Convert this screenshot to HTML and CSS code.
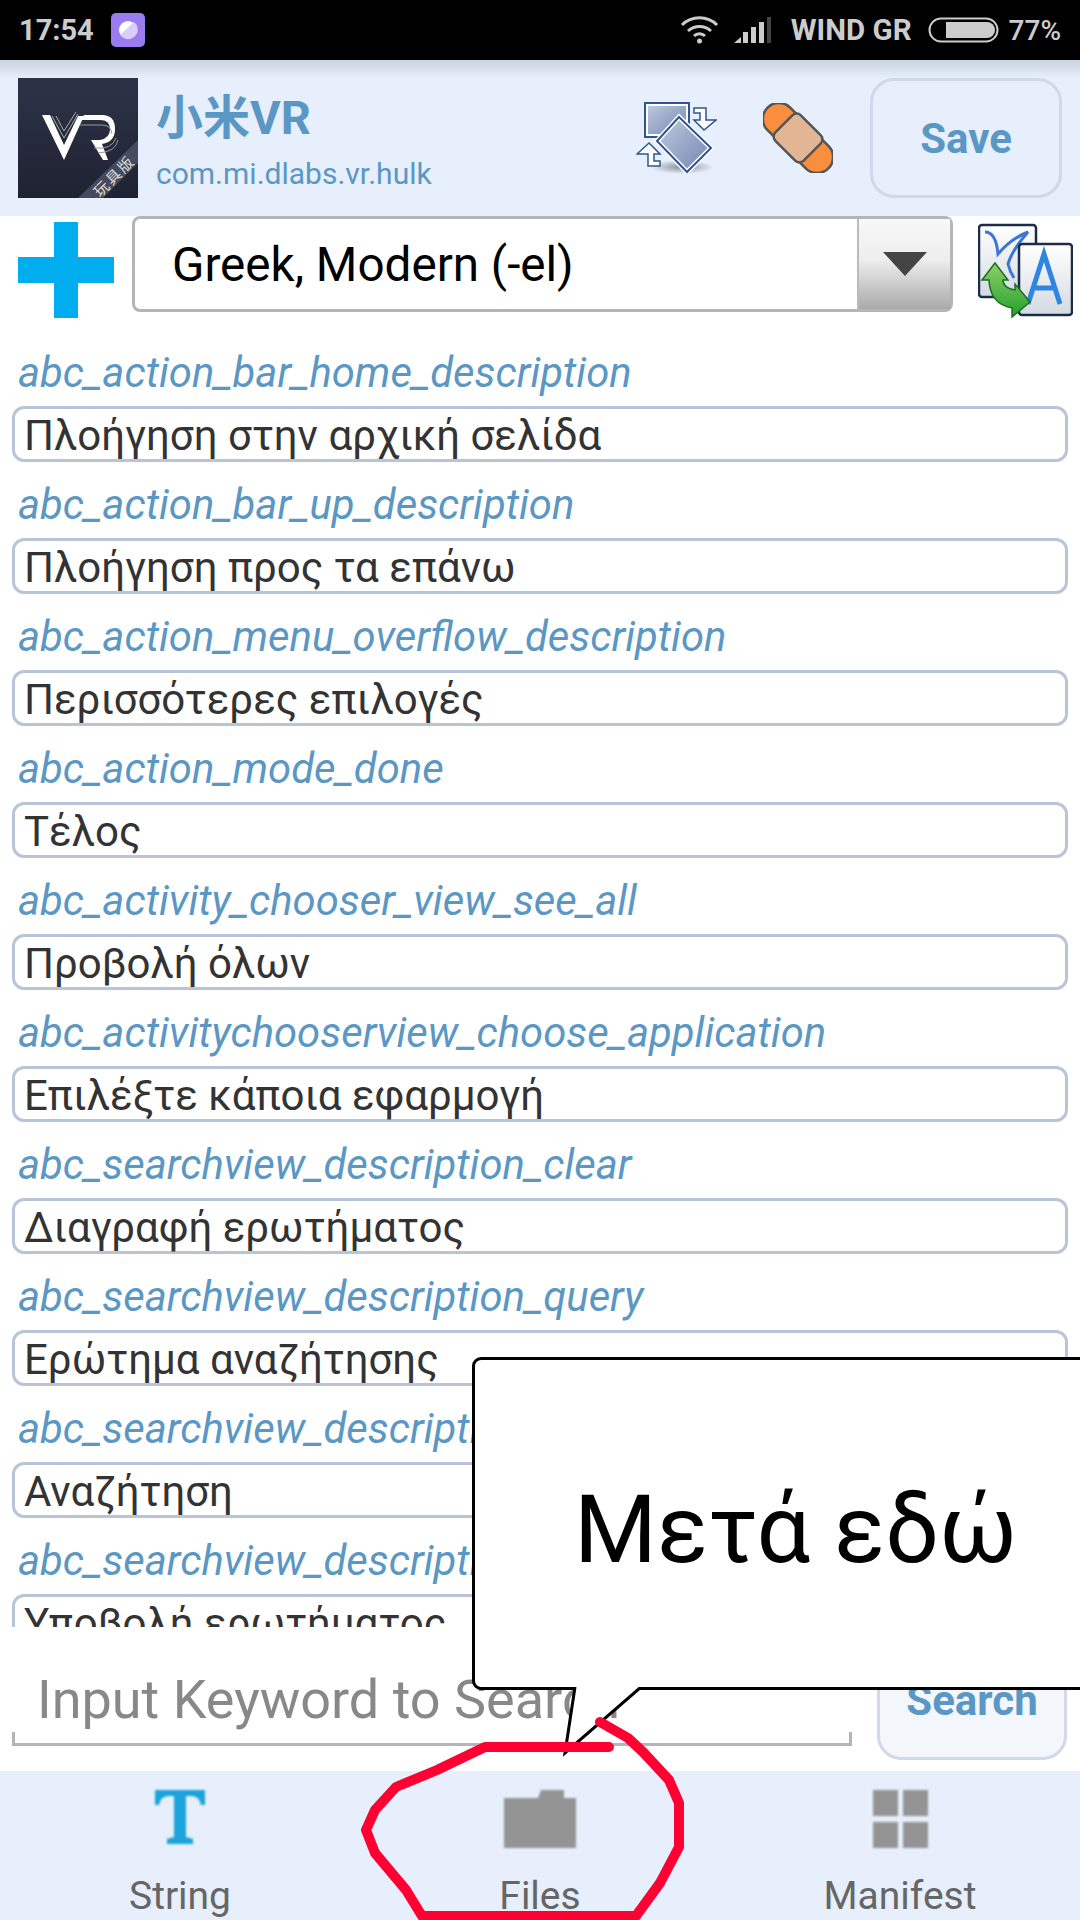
FILE: index.html
```html
<!DOCTYPE html>
<html lang="el">
<head>
  <meta charset="UTF-8" />
  <meta name="viewport" content="width=device-width, initial-scale=1.0" />
  <title>String Editor</title>
  <link rel="stylesheet" href="styles.css">
</head>
<body>
  <div class="app">
    <div class="status">
      <div class="status-left">
        <span class="clock">17:54</span>
        <svg class="notif" width="34" height="34" viewBox="0 0 34 34">
          <rect width="34" height="34" rx="5" fill="#9a7cf0"/>
          <circle cx="17" cy="17" r="9" fill="#fff"/>
          <path d="M9 22 L23 9 A9 9 0 0 1 12 24Z" fill="#d9cdfa"/>
        </svg>
      </div>
      <div class="status-right">
        <svg width="39" height="28" viewBox="0 0 39 28" fill="none" stroke="#ccc" stroke-width="3">
          <path d="M2 9 A25 25 0 0 1 37 9"/>
          <path d="M8 15 A17 17 0 0 1 31 15"/>
          <path d="M14 20 A8 8 0 0 1 25 20"/>
          <circle cx="19.500" cy="25" r="2.500" fill="#ccc" stroke="none"/>
        </svg>
        <svg class="signal" width="37" height="26" viewBox="0 0 37 26" fill="#ccc">
          <path d="M0 26 L7 20 V26Z"/>
          <rect x="9" y="15" width="5" height="11"/>
          <rect x="17" y="10" width="5" height="16"/>
          <rect x="25" y="5" width="5" height="21"/>
          <rect x="33" y="0" width="4" height="26" fill="#444"/>
        </svg>
        <span class="carrier">WIND GR</span>
        <svg width="71" height="26" viewBox="0 0 71 26">
          <rect x="1.500" y="1.500" width="68" height="23" rx="11.500" fill="none" stroke="#ccc" stroke-width="2"/>
          <path d="M18 5 H59 A8 8 0 0 1 59 21 H18Z" fill="#ccc"/>
        </svg>
        <span class="pct">77%</span>
      </div>
    </div>

    <div class="header">
      <svg class="app-icon" width="120" height="120" viewBox="0 0 120 120">
        <defs>
          <linearGradient id="iconBg" x1="0" y1="0" x2="0" y2="1">
            <stop offset="0" stop-color="#2d3347"/>
            <stop offset="1" stop-color="#1f2232"/>
          </linearGradient>
        </defs>
        <rect width="120" height="120" fill="url(#iconBg)"/>
        <path d="M120 62 V85 L85 120 H60Z" fill="#454b5e"/>
        <path d="M24 37 H32 L46 67 L60 38 H66 L46 82Z" fill="#fff"/>
        <path d="M34 38 L46 60 L60 36 M38 38 L46 53 L58 34" fill="none" stroke="#aaa" stroke-width="1"/>
        <path d="M66 37 H84 Q97 37 97 51 Q97 64 84 66 L90 82 H85 L73 62 H82 Q92 60 92 51 Q92 42 82 42 H63Z" fill="#fff"/>
        <path d="M62 47 H84 Q93 47 94 56 M76 70 Q94 72 98 60 M80 75 Q98 74 100 62" fill="none" stroke="#999" stroke-width="1"/>
        <text class="icon-tag" transform="translate(100 102) rotate(-45)">玩具版</text>
      </svg>
      <div class="app-names">
        <div class="app-title">小米VR</div>
        <div class="app-package">com.mi.dlabs.vr.hulk</div>
      </div>
      <svg class="swap-icon" width="81" height="72" viewBox="0 0 81 72">
        <defs>
          <linearGradient id="swapBlue" x1="0" y1="0" x2="1" y2="1">
            <stop offset="0" stop-color="#c4cde2"/>
            <stop offset="1" stop-color="#6f84b0"/>
          </linearGradient>
          <radialGradient id="swapShadow">
            <stop offset="0" stop-color="#8a8f96"/>
            <stop offset="1" stop-color="#e6effb"/>
          </radialGradient>
        </defs>
        <ellipse cx="46" cy="65" rx="32" ry="7" fill="url(#swapShadow)"/>
        <rect x="9" y="1" width="44" height="34" fill="url(#swapBlue)" stroke="#2e5590" stroke-width="2"/>
        <rect x="11" y="3" width="40" height="30" fill="none" stroke="#fff" stroke-width="2"/>
        <path d="M43 15 L75 46 L51 70 L21 39Z" fill="url(#swapBlue)" stroke="#fff" stroke-width="5"/>
        <path d="M43 15 L75 46 L51 70 L21 39Z" fill="none" stroke="#2e5590" stroke-width="2"/>
        <path d="M58 6 H70 V18 H80 L68 28 L58 18 H64 V11 H58Z" fill="#fff" stroke="#2e5590" stroke-width="1.500"/>
        <path d="M24 64 H12 V52 H1 L13 41 L24 52 H18 V59 H24Z" fill="#fff" stroke="#2e5590" stroke-width="1.500"/>
      </svg>
      <svg class="patch-icon" width="70" height="70" viewBox="0 0 70 70">
        <g transform="rotate(45 35 35)">
          <rect x="-8" y="19" width="86" height="32" rx="16" fill="#f98f3e" stroke="#555" stroke-width="2.500"/>
          <rect x="15" y="17" width="40" height="36" rx="6" fill="#e2b594" stroke="#555" stroke-width="2.500"/>
        </g>
      </svg>
      <div class="btn btn-save">Save</div>
    </div>

    <div class="lang-row">
      <div class="plus"></div>
      <div class="spinner">
        <div class="spinner-text">Greek, Modern (-el)</div>
        <div class="spinner-arrow"><div class="arrow-down"></div></div>
      </div>
      <svg class="translate-icon" width="95" height="96" viewBox="0 0 95 96">
        <defs>
          <linearGradient id="pageBg" x1="0" y1="0" x2="0" y2="1">
            <stop offset="0" stop-color="#fff"/>
            <stop offset="1" stop-color="#d4dae2"/>
          </linearGradient>
          <linearGradient id="arrowGreen" x1="0" y1="0" x2="0" y2="1">
            <stop offset="0" stop-color="#8ed06a"/>
            <stop offset="1" stop-color="#22a02a"/>
          </linearGradient>
        </defs>
        <rect x="1" y="3" width="57" height="72" rx="3" fill="url(#pageBg)" stroke="#1c2c48" stroke-width="2.500"/>
        <path d="M7 10 Q18 10 20 32 Q34 16 50 10 Q34 28 30 42 Q32 50 36 56" fill="none" stroke="#3d74d8" stroke-width="3"/>
        <rect x="41" y="22" width="53" height="71" rx="3" fill="url(#pageBg)" stroke="#1c2c48" stroke-width="2.500"/>
        <path d="M50 82 L66 32 L82 82 M56 66 H76" fill="none" stroke="#2f86e2" stroke-width="5"/>
        <path d="M17 41 L30 58 H25 Q25 66 37 68 V62 L52 80 L34 95 V86 Q12 82 11 58 H4Z" fill="url(#arrowGreen)" stroke="#1c6e22" stroke-width="1.500"/>
      </svg>
    </div>

    <div class="list">
      <div class="row"><div class="key">abc_action_bar_home_description</div><div class="val">Πλοήγηση στην αρχική σελίδα</div></div>
      <div class="row"><div class="key">abc_action_bar_up_description</div><div class="val">Πλοήγηση προς τα επάνω</div></div>
      <div class="row"><div class="key">abc_action_menu_overflow_description</div><div class="val">Περισσότερες επιλογές</div></div>
      <div class="row"><div class="key">abc_action_mode_done</div><div class="val">Τέλος</div></div>
      <div class="row"><div class="key">abc_activity_chooser_view_see_all</div><div class="val">Προβολή όλων</div></div>
      <div class="row"><div class="key">abc_activitychooserview_choose_application</div><div class="val">Επιλέξτε κάποια εφαρμογή</div></div>
      <div class="row"><div class="key">abc_searchview_description_clear</div><div class="val">Διαγραφή ερωτήματος</div></div>
      <div class="row"><div class="key">abc_searchview_description_query</div><div class="val">Ερώτημα αναζήτησης</div></div>
      <div class="row"><div class="key">abc_searchview_description_search</div><div class="val">Αναζήτηση</div></div>
      <div class="row"><div class="key">abc_searchview_description_submit</div><div class="val">Υποβολή ερωτήματος</div></div>
    </div>

    <div class="search-row">
      <div class="search-field">Input Keyword to Search</div>
      <div class="btn btn-search">Search</div>
    </div>

    <div class="tabs">
      <div class="tab">
        <svg class="tab-icon" width="50" height="54" viewBox="0 0 50 54" fill="#1ba3da">
          <path d="M0 0 H50 V15 H46 Q45 7 37 6 H31 V47 L38 49 V54 H12 V49 L19 47 V6 H13 Q5 7 4 15 H0Z"/>
        </svg>
        <span>String</span>
      </div>
      <div class="tab">
        <svg class="tab-icon" width="72" height="58" viewBox="0 0 72 58" fill="#949494">
          <path d="M0 8 H34 L37 0 H60 V8 H72 V58 H0Z"/>
        </svg>
        <span>Files</span>
      </div>
      <div class="tab">
        <svg class="tab-icon" width="55" height="58" viewBox="0 0 55 58" fill="#949494">
          <rect width="25" height="26"/><rect x="30" width="25" height="26"/>
          <rect y="32" width="25" height="26"/><rect x="30" y="32" width="25" height="26"/>
        </svg>
        <span>Manifest</span>
      </div>
    </div>

    <!-- callout and hand drawn circle on top of the screenshot -->
    <div class="callout">Μετά εδώ</div>
    <svg class="callout-tail" width="90" height="70" viewBox="0 0 90 70">
      <path d="M18 0 L8 66 L84 0" fill="#fff" stroke="#000" stroke-width="3"/>
    </svg>
    <svg class="scribble" width="1080" height="1920" viewBox="0 0 1080 1920">
      <path d="M600 1722 L628 1738 L643 1752 L669 1780 L679 1803 L679 1847 L660 1883 L636 1916 L422 1916 L406 1890 L375 1853 L366 1830 L375 1810 L396 1787 L437 1770 L485 1747 L609 1747" fill="none" stroke="#ff0033" stroke-width="10" stroke-linecap="round" stroke-linejoin="round"/>
    </svg>
  </div>
</body>
</html>
```
FILE: styles.css
```css
* {
  box-sizing: border-box;
}

html, body {
  margin: 0;
  padding: 0;
}

body {
  font-family: Roboto, "Noto Sans CJK SC", sans-serif;
  background: white;
}

.app {
  position: relative;
  width: 1080px;
  height: 1920px;
  overflow: hidden;
  display: flex;
  flex-direction: column;
}

.status {
  height: 60px;
  background: #000;
  color: #ccc;
  font-size: 28px;
  font-weight: 700;
  display: flex;
  align-items: center;
  justify-content: space-between;
  padding: 0 19px;
}

.status-left {
  display: flex;
  align-items: center;
  gap: 17px;
}

.clock {
  font-size: 29px;
}

.status-right {
  display: flex;
  align-items: center;
}

.signal {
  margin-left: 15px;
}

.carrier {
  font-size: 29.5px;
  margin-left: 20px;
  margin-right: 16px;
}

.pct {
  margin-left: 10px;
  font-weight: 500;
}

.header {
  height: 156px;
  background: linear-gradient(#c8d3df, #e6effb 18px);
  display: flex;
  align-items: center;
  padding: 0 18px;
}

.app-names {
  margin-left: 18px;
  padding-top: 6px;
  flex: 1;
}

.app-title {
  font-size: 47px;
  font-weight: 700;
  color: #5b97c4;
  line-height: 62px;
}

.app-package {
  font-size: 30px;
  color: #5b97c4;
  line-height: 44px;
  margin-top: 3px;
}

.patch-icon {
  margin-left: 46px;
}

.btn {
  width: 190px;
  height: 120px;
  border: 3px solid #cfd9ea;
  border-radius: 24px;
  color: #5b97c4;
  font-size: 42px;
  font-weight: 700;
  display: flex;
  align-items: center;
  justify-content: center;
}

.btn-save {
  width: 192px;
  margin-left: 37px;
}

.lang-row {
  height: 114px;
  display: flex;
  align-items: flex-start;
  padding-left: 18px;
}

.plus {
  width: 96px;
  height: 96px;
  margin-top: 6px;
  background:
    linear-gradient(#00aeef, #00aeef) center / 24px 96px no-repeat,
    linear-gradient(#00aeef, #00aeef) center / 96px 26px no-repeat;
}

.spinner {
  width: 821px;
  height: 96px;
  margin-left: 18px;
  border: 3px solid #b5b5b5;
  border-radius: 8px;
  display: flex;
}

.spinner-text {
  flex: 1;
  font-size: 47.6px;
  color: #000;
  padding-left: 37px;
  line-height: 92px;
}

.spinner-arrow {
  width: 93px;
  background: linear-gradient(#f8f8f8, #eee 45%, #aaa);
  border-left: 2px solid #bbb;
  display: flex;
  justify-content: center;
  padding-top: 33px;
}

.arrow-down {
  width: 0;
  height: 0;
  border-left: 22px solid transparent;
  border-right: 22px solid transparent;
  border-top: 24px solid #444;
}

.translate-icon {
  margin-left: 25px;
  margin-top: 6px;
}

.list {
  height: 1297px;
  overflow: hidden;
}

.row {
  height: 132px;
  padding: 13px 12px 0;
}

.key {
  font-size: 41.8px;
  font-style: italic;
  color: #5b97c4;
  line-height: 60px;
  margin-bottom: 3px;
  padding-left: 6px;
  white-space: nowrap;
}

.val {
  height: 56px;
  border: 3px solid #b8c5d9;
  border-radius: 12px;
  font-size: 42px;
  color: #333;
  line-height: 53px;
  padding-left: 9px;
}

.search-row {
  height: 144px;
  display: flex;
  align-items: flex-end;
  padding-left: 12px;
}

.search-field {
  position: relative;
  width: 840px;
  height: 116px;
  margin-bottom: 25px;
  border-bottom: 3px solid #b5b5b5;
  font-size: 54px;
  color: #888;
  line-height: 140px;
  padding-left: 25px;
  white-space: nowrap;
}

.search-field::before,
.search-field::after {
  content: "";
  position: absolute;
  bottom: 0;
  width: 3px;
  height: 11px;
  background: #b5b5b5;
}

.search-field::before {
  left: 0;
}

.search-field::after {
  right: 0;
}

.btn-search {
  margin-left: 25px;
  margin-bottom: 11px;
  background: #f3f6fb;
}

.tabs {
  height: 149px;
  background: #e6effb;
  display: flex;
}

.tab {
  width: 360px;
  display: flex;
  flex-direction: column;
  align-items: center;
  padding-top: 19px;
  font-size: 39px;
  color: #666;
}

.tab span {
  line-height: 44px;
  margin-top: auto;
  margin-bottom: 2px;
}

.tab-icon {
  filter: blur(1px);
}

.callout {
  position: absolute;
  left: 472px;
  top: 1357px;
  width: 640px;
  height: 333px;
  background: white;
  border: 3px solid #000;
  border-radius: 9px;
  font-size: 95px;
  color: #000;
  line-height: 339px;
  padding-left: 99px;
}

.callout-tail {
  position: absolute;
  left: 557px;
  top: 1687px;
}

.scribble {
  position: absolute;
  left: 0;
  top: 0;
}

.icon-tag {
  font-size: 15px;
  letter-spacing: 2px;
  fill: #ddd;
  text-anchor: middle;
}
```
